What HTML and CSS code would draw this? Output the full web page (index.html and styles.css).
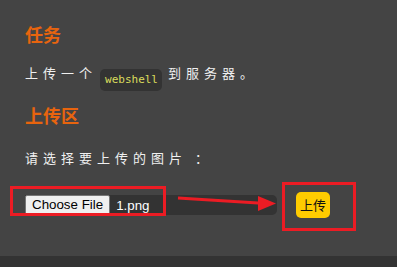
FILE: index.html
```html
<!DOCTYPE html>
<html lang="zh">
<head>
<meta charset="utf-8">
<link rel="stylesheet" href="styles.css">
</head>
<body>
<div class="panel">
  <h2 class="title">任务</h2>
  <p class="text">上传一个<code class="code">webshell</code>到服务器。</p>
  <h2 class="title title-2">上传区</h2>
  <p class="text text-2">请选择要上传的图片 ：</p>
  <div class="row">
    <span class="file"><button class="file-btn" type="button">Choose File</button><span class="file-name">1.png</span></span>
    <button class="upload" type="button">上传</button>
  </div>
</div>
<svg class="marks" width="397" height="267" viewBox="0 0 397 267">
  <rect x="11.5" y="187.5" width="153" height="27" fill="none" stroke="#ec1c24" stroke-width="3"/>
  <rect x="283.5" y="183.5" width="71" height="46" fill="none" stroke="#ec1c24" stroke-width="3"/>
  <line x1="178" y1="198" x2="262" y2="203.3" stroke="#ec1c24" stroke-width="3"/>
  <polygon points="258,196 276,203.5 258,211" fill="#ec1c24"/>
</svg>
</body>
</html>
```
FILE: styles.css
```css
html, body {
  margin: 0;
  padding: 0;
}
body {
  background: #333333;
  width: 397px;
  height: 267px;
  overflow: hidden;
  position: relative;
  font-family: "Noto Sans CJK SC", "Noto Sans", sans-serif;
}
.panel {
  background: #444444;
  height: 256px;
  box-sizing: border-box;
  padding: 22px 0 0 25px;
  display: flex;
  flex-direction: column;
  align-items: flex-start;
}
.title {
  margin: 0;
  font-size: 18px;
  line-height: 24px;
  font-weight: 700;
  color: #e8640e;
}
.title-2 {
  margin-top: 12px;
}
.text {
  margin: 16px 0 0;
  font-size: 13px;
  line-height: 22px;
  letter-spacing: 5px;
  color: #f0f0f0;
}
.text-2 {
  margin-top: 20px;
}
.code {
  display: inline-block;
  font-family: "DejaVu Sans Mono", monospace;
  font-size: 11px;
  line-height: 16px;
  letter-spacing: 0;
  color: #dadc5c;
  background: #333333;
  padding: 3px 4px 3px 5px;
  margin: 0 6px 0 3px;
  border-radius: 5px;
  vertical-align: -5px;
}
.row {
  margin-top: 23px;
  display: flex;
  align-items: center;
  gap: 19px;
}
.file {
  display: flex;
  align-items: center;
  width: 252px;
  height: 20px;
  background: #333333;
  border-radius: 0 5px 5px 0;
}
.file-btn {
  box-sizing: border-box;
  font-family: "Liberation Sans", Arial, sans-serif;
  font-size: 13.33px;
  height: 20px;
  padding: 0 6px;
  margin: 0;
  background: #efefef;
  color: #000;
  border: 1px solid #767676;
  border-radius: 2px;
  line-height: 16px;
}
.file-name {
  margin-left: 6px;
  font-family: "Liberation Sans", Arial, sans-serif;
  font-size: 13.33px;
  color: #ffffff;
}
.upload {
  font-family: "Noto Sans CJK SC", sans-serif;
  font-size: 13px;
  line-height: 18px;
  height: 26px;
  padding: 4px 4px;
  margin: 0;
  border: none;
  border-radius: 5px;
  background: #ffcc00;
  color: #111111;
}
.marks {
  position: absolute;
  left: 0;
  top: 0;
  pointer-events: none;
}
```
